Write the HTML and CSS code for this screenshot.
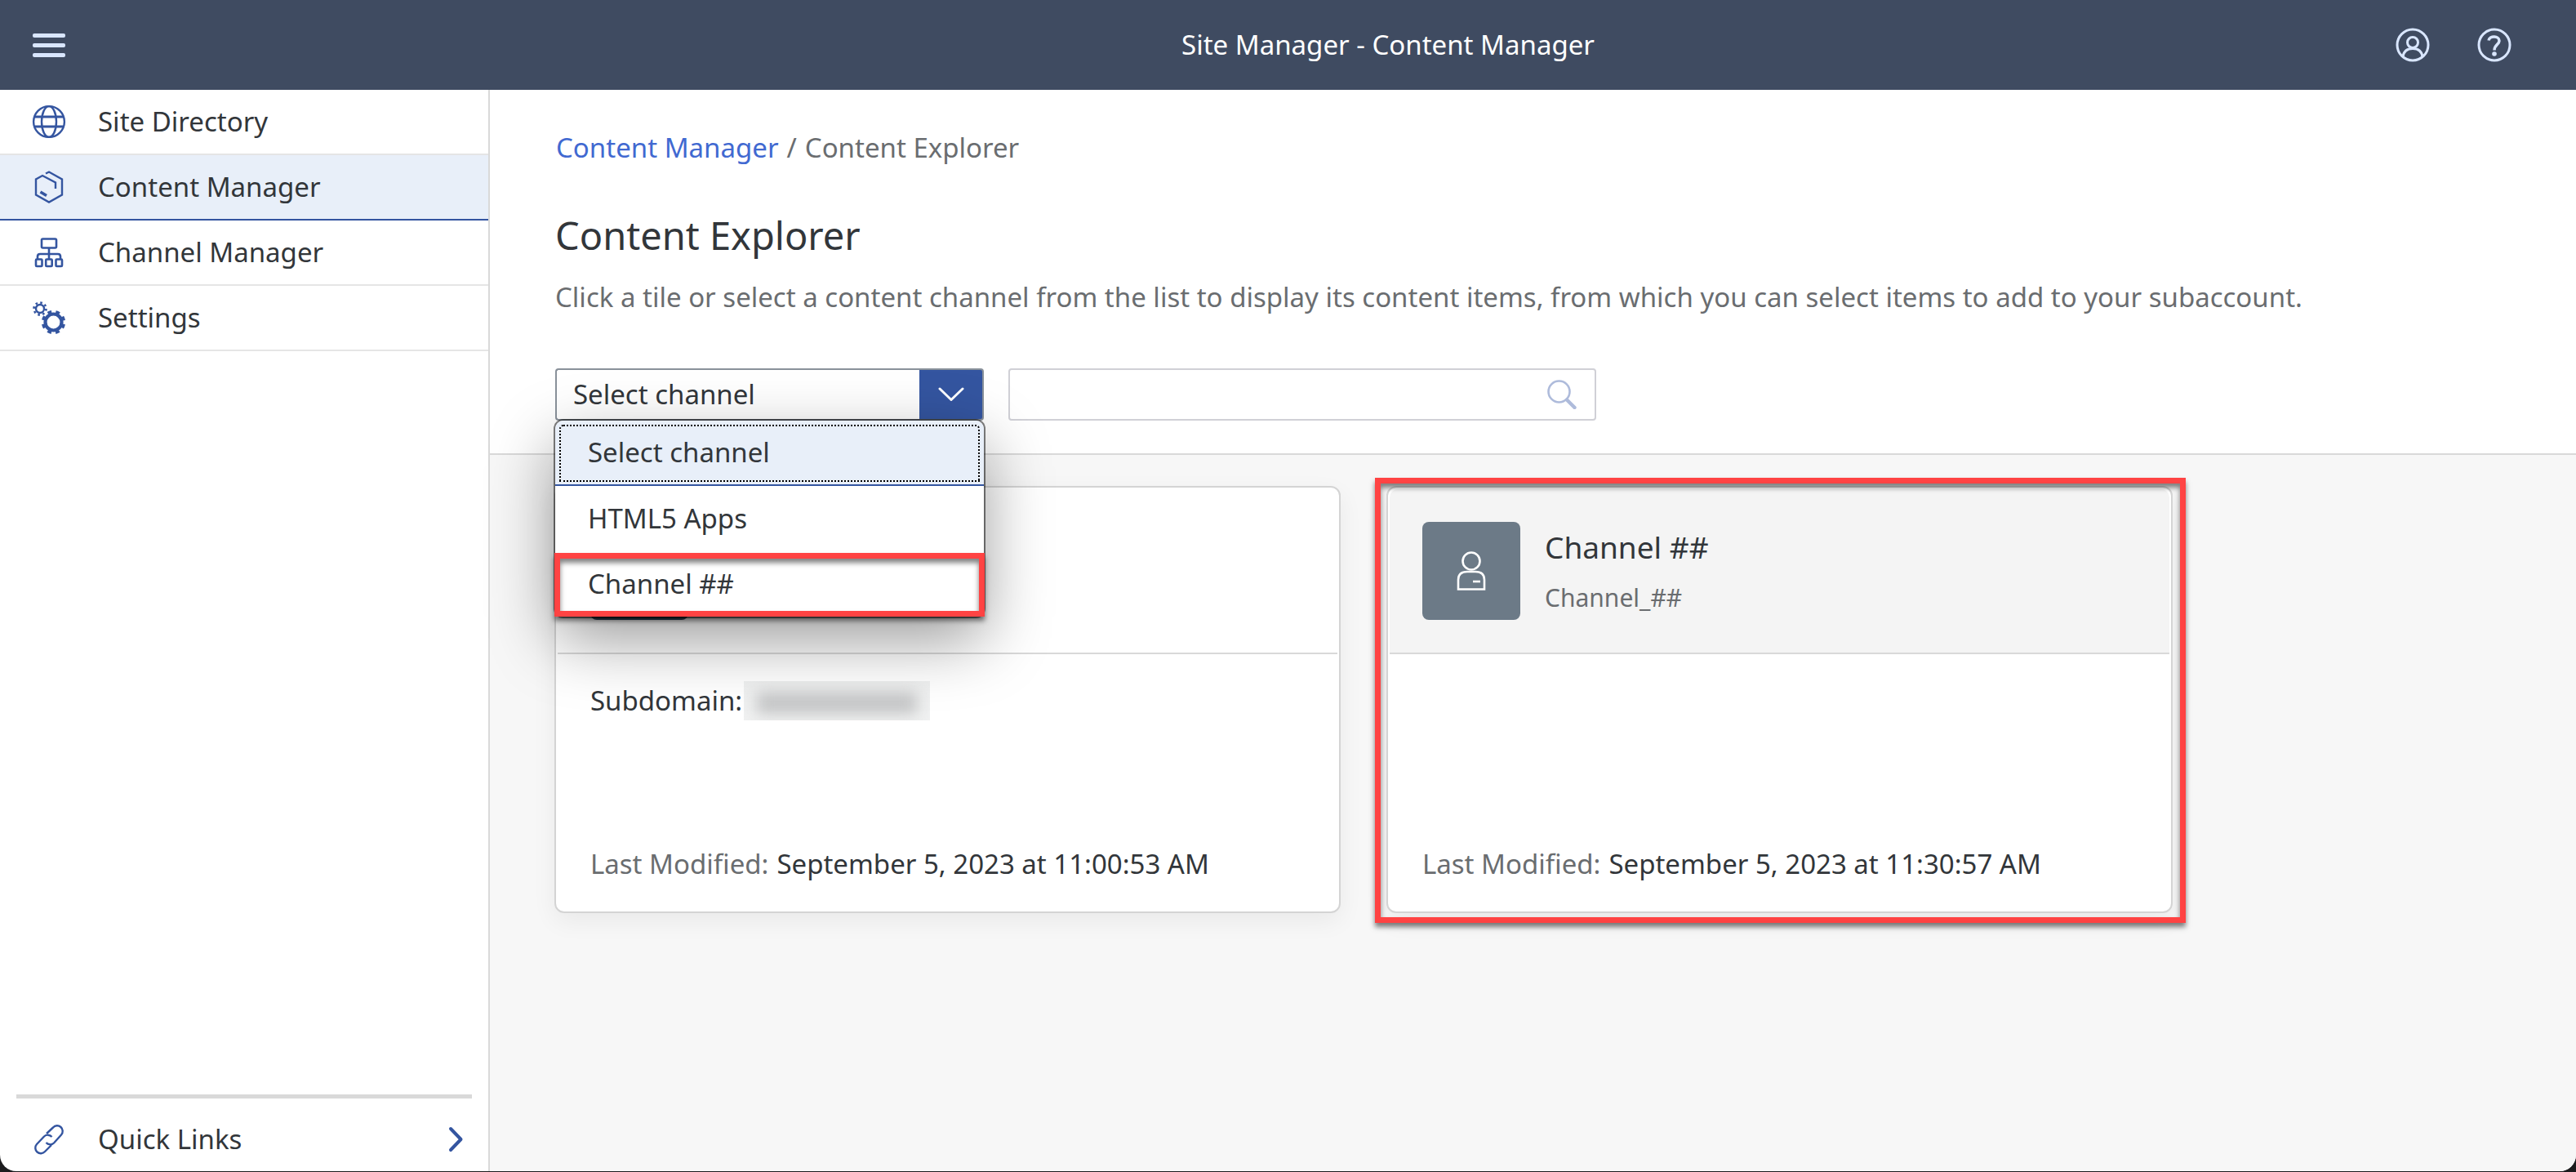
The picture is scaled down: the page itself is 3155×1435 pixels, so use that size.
FILE: index.html
```html
<!DOCTYPE html>
<html lang="en">
<head>
<meta charset="utf-8">
<title>Site Manager - Content Manager</title>
<meta name="viewport" content="width=device-width, initial-scale=1">
<link rel="stylesheet" href="styles.css">
</head>
<body>
<div class="window">
  <header class="shell">
    <button class="icon-button" type="button" aria-label="Toggle navigation">
      <svg class="icon" viewBox="0 0 40 40" aria-hidden="true"><g fill="currentColor"><rect y="6" width="40" height="5" rx="2"/><rect y="18" width="40" height="5" rx="2"/><rect y="30" width="40" height="5" rx="2"/></g></svg>
    </button>
    <span class="shell-title">Site Manager - Content Manager</span>
    <div class="shell-actions">
      <button class="icon-button" type="button" aria-label="User profile">
        <svg class="icon icon-shell" viewBox="0 0 42 42" aria-hidden="true"><g fill="none" stroke="currentColor" stroke-width="3"><circle cx="21" cy="21" r="19"/><circle cx="21" cy="18" r="6.500"/><path d="M9 35.500C10 28.500 14 25.500 21 25.500S32 28.500 33 35.500"/></g></svg>
      </button>
      <button class="icon-button" type="button" aria-label="Help">
        <svg class="icon icon-shell" viewBox="0 0 42 42" aria-hidden="true"><g fill="none" stroke="currentColor" stroke-width="3"><circle cx="21" cy="21" r="19"/><path stroke-width="3.500" d="M14 15.500C15 9.500 27 9.500 27 16C27 20.500 21 21 21 27.500"/></g><circle cx="21" cy="32" r="2.800" fill="currentColor"/></svg>
      </button>
    </div>
  </header>

  <div class="workspace">
    <nav class="sidebar" aria-label="Main">
      <ul class="nav-list">
        <li><a class="nav-item" href="#sites">
          <svg class="icon" viewBox="0 0 40 40" aria-hidden="true"><g fill="none" stroke="currentColor" stroke-width="2.400"><circle cx="20" cy="20" r="18.900"/><ellipse cx="20" cy="20" rx="9" ry="18.900"/><path stroke-width="3" d="M2.500 14h35M2.500 26h35"/></g></svg>
          Site Directory</a></li>
        <li><a class="nav-item nav-item-selected" href="#content" aria-current="page">
          <svg class="icon" viewBox="0 0 40 40" aria-hidden="true"><g fill="none" stroke="currentColor" stroke-width="2.400"><path d="M16 3.500L20 1.500L36 10.500V29.500L20 38.500L4 29.500V10.500L12 6L28 14.500V22"/><path stroke-width="3.400" d="M9.500 26L17 30.500"/></g></svg>
          Content Manager</a></li>
        <li><a class="nav-item" href="#channels">
          <svg class="icon" viewBox="0 0 40 40" aria-hidden="true"><g fill="none" stroke="currentColor" stroke-width="2.600"><rect x="11" y="3.500" width="18" height="11" rx="1.500"/><path d="M20 14V28M6 28V25Q6 22 9 22H31Q34 22 34 25V28"/><rect x="4" y="28.500" width="7.500" height="8.500" rx="1"/><rect x="16.200" y="28.500" width="7.500" height="8.500" rx="1"/><rect x="28.500" y="28.500" width="7.500" height="8.500" rx="1"/></g></svg>
          Channel Manager</a></li>
        <li><a class="nav-item" href="#settings">
          <svg class="icon" viewBox="0 0 40 40" aria-hidden="true"><g fill="none" stroke="currentColor"><circle cx="9" cy="9" r="5" stroke-width="2.400"/><circle cx="9" cy="9" r="7.500" stroke-width="2.600" stroke-dasharray="2.600 3.290"/><circle cx="25.500" cy="25.500" r="10" stroke-width="4.200"/><circle cx="25.500" cy="25.500" r="12.800" stroke-width="3.800" stroke-dasharray="4.800 5.253" stroke-dashoffset="-2.500"/></g></svg>
          Settings</a></li>
      </ul>
      <a class="nav-item quick-links" href="#links">
        <svg class="icon" viewBox="0 0 40 40" aria-hidden="true"><g fill="none" stroke="currentColor" stroke-width="2.400" stroke-linejoin="round"><path d="M17 13L25 5.500A6.500 6.500 0 0 1 35 14.500L26 24.500A6.500 6.500 0 0 1 16.500 24"/><path d="M23 27L15 35A6.500 6.500 0 0 1 5 26L14 16.500A6.500 6.500 0 0 1 23.500 17"/></g></svg>
        Quick Links
        <svg class="icon-chevron" viewBox="0 0 20 32" aria-hidden="true"><path d="M3 3L15.500 16L3 29" fill="none" stroke="currentColor" stroke-width="4" stroke-linecap="round" stroke-linejoin="round"/></svg>
      </a>
    </nav>

    <main class="content">
      <section class="page-head">
        <nav class="breadcrumb" aria-label="Breadcrumb">
          <a href="#content">Content Manager</a><span>/</span><span>Content Explorer</span>
        </nav>
        <h1 class="page-title">Content Explorer</h1>
        <p class="page-text">Click a tile or select a content channel from the list to display its content items, from which you can select items to add to your subaccount.</p>
        <div class="filters">
          <div class="channel-picker">
            <select class="channel-select" aria-label="Channel">
              <option>Select channel</option>
              <option>HTML5 Apps</option>
              <option>Channel ##</option>
            </select>
            <button class="channel-arrow" type="button" aria-label="Show channels">
              <svg class="icon-arrow" viewBox="0 0 32 18" aria-hidden="true"><path d="M2 2L16 15.500L30 2" fill="none" stroke="currentColor" stroke-width="3" stroke-linecap="round" stroke-linejoin="round"/></svg>
            </button>
            <ul class="channel-menu" role="listbox" aria-label="Channels">
              <li class="channel-option channel-option-active" role="option" aria-selected="true">Select channel</li>
              <li class="channel-option" role="option">HTML5 Apps</li>
              <li class="channel-option channel-option-marked" role="option">Channel ##</li>
            </ul>
          </div>
          <label class="search">
            <input class="search-input" type="search" aria-label="Search">
            <svg class="icon-search" viewBox="0 0 36 36" aria-hidden="true"><g fill="none" stroke="currentColor"><circle cx="14.500" cy="14.500" r="13" stroke-width="2.600"/><path d="M24 24.500L33.500 34" stroke-width="4.400" stroke-linecap="round"/></g></svg>
          </label>
        </div>
      </section>

      <section class="tiles" aria-label="Channels">
        <article class="tile">
          <div class="tile-head">
            <div class="avatar avatar-dark"></div>
          </div>
          <div class="tile-body">
            <p class="tile-line tile-line-tight">Subdomain: <span class="redacted"></span></p>
            <p class="tile-line tile-foot"><span class="muted">Last Modified:</span> September 5, 2023 at 11:00:53 AM</p>
          </div>
        </article>
        <article class="tile tile-marked">
          <div class="tile-head tile-head-hover">
            <div class="avatar">
              <svg class="icon-person" viewBox="0 0 36 50" aria-hidden="true"><g fill="none" stroke="currentColor" stroke-width="2.600"><circle cx="18" cy="13" r="10.500"/><path d="M2 47.500V36Q2 26 13 26H23Q34 26 34 36V47.500Z"/><path d="M20 38H29"/></g></svg>
            </div>
            <div class="tile-names">
              <h2 class="tile-title">Channel ##</h2>
              <p class="tile-subtitle">Channel_##</p>
            </div>
          </div>
          <div class="tile-body">
            <p class="tile-line tile-foot"><span class="muted">Last Modified:</span> September 5, 2023 at 11:30:57 AM</p>
          </div>
        </article>
      </section>
    </main>
  </div>
</div>
</body>
</html>
```
FILE: styles.css
```css
* { box-sizing: border-box; }

body {
  margin: 0;
  background: #1c1c1e;
  color: #32363a;
  font: 33px/40px "Noto Sans", "Open Sans", sans-serif;
}

h1, h2, p, ul { margin: 0; padding: 0; font-weight: 400; }
ul { list-style: none; }
a { text-decoration: none; }
button, select, input { font: inherit; color: inherit; }

.window {
  display: flex;
  flex-direction: column;
  min-height: calc(100vh - 1px);
  margin-bottom: 1px;
  overflow: hidden;
  border-radius: 0 0 20px 20px;
  background: #fff;
}

/* Shell bar */
.shell {
  display: flex;
  align-items: center;
  height: 110px;
  padding: 0 79px 0 40px;
  background: #3f4b61;
  color: #d9e6ff;
}
.shell-title {
  flex: 1;
  padding-left: 386px;
  text-align: center;
  color: #fff;
}
.shell-actions { display: flex; gap: 58px; }
.icon-button {
  display: flex;
  padding: 0;
  border: 0;
  background: none;
}
.icon { flex: none; width: 40px; height: 40px; overflow: visible; }
.icon-shell { width: 42px; height: 42px; }

.workspace { display: flex; flex: 1; }

/* Side navigation */
.sidebar {
  display: flex;
  flex: none;
  flex-direction: column;
  justify-content: space-between;
  width: 600px;
  border-right: 2px solid #d9d9d9;
}
.nav-item {
  display: flex;
  align-items: center;
  gap: 40px;
  height: 80px;
  padding: 0 40px;
  border-bottom: 2px solid #e5e5e5;
  color: #32363a;
}
.nav-item .icon, .icon-chevron { color: #3455a0; }
.nav-item-selected { border-color: #3455a0; background: #e8eff9; }
.quick-links {
  height: 94px;
  margin: 0 20px;
  padding: 10px 9px 0 20px;
  border-top: 5px solid #d9d9d9;
  border-bottom: 0;
}
.icon-chevron { width: 20px; height: 32px; margin-left: auto; }

/* Page header */
.content { display: flex; flex: 1; flex-direction: column; min-width: 0; }
.page-head {
  padding: 51px 80px 40px;
  border-bottom: 2px solid #d9d9d9;
}
.breadcrumb { display: flex; gap: 10px; padding-left: 1px; color: #6a6d70; }
.breadcrumb a { color: #4169d1; }
.page-title { margin-top: 53px; font-size: 47px; line-height: 68px; }
.page-text { margin-top: 22px; color: #6a6d70; }
.filters { display: flex; gap: 30px; margin-top: 67px; }

.channel-picker { position: relative; display: flex; width: 525px; height: 64px; }
.channel-select {
  flex: 1;
  min-width: 0;
  padding: 0 20px;
  border: 2px solid #89919a;
  border-right: 0;
  border-radius: 4px 0 0 4px;
  appearance: none;
  background: #fff;
}
.channel-arrow {
  display: flex;
  align-items: center;
  justify-content: center;
  width: 79px;
  padding: 0;
  border: 2px solid #89919a;
  border-left: 0;
  border-radius: 0 4px 4px 0;
  background: #3455a0;
  color: #fff;
}
.icon-arrow { width: 32px; height: 18px; }
.channel-menu {
  position: absolute;
  z-index: 2;
  top: 64px;
  left: 0;
  width: 100%;
  border-radius: 10px;
  background: #fff;
  box-shadow: 0 0 0 2px rgba(0, 0, 0, .5), 0 28px 80px rgba(0, 0, 0, .4);
}
.channel-option {
  position: relative;
  display: flex;
  align-items: center;
  height: 80px;
  padding: 0 40px;
}
.channel-option-active {
  border-bottom: 2px solid #3455a0;
  border-radius: 10px 10px 0 0;
  background: #e8eff9;
  outline: 2px dotted #000;
  outline-offset: -7px;
}
.channel-option-marked::after,
.tile-marked::after {
  content: "";
  position: absolute;
  border: 7px solid #ff4343;
  box-shadow: 0 5px 6px rgba(0, 0, 0, .5), inset 0 5px 6px rgba(0, 0, 0, .5);
}
.channel-option-marked::after { inset: 2px -1px 0; }

.search {
  display: flex;
  align-items: center;
  width: 720px;
  height: 64px;
  padding-right: 22px;
  border: 2px solid #d0d0d6;
  border-radius: 4px;
}
.search-input {
  flex: 1;
  min-width: 0;
  padding: 0 20px;
  border: 0;
  outline: 0;
  background: none;
}
.icon-search { width: 36px; height: 36px; color: #aebbdb; }

/* Channel tiles */
.tiles {
  display: grid;
  flex: 1;
  grid-template-columns: repeat(auto-fill, 963px);
  align-content: start;
  gap: 56px;
  padding: 38px 79px;
  background: #f7f7f7;
}
.tile {
  position: relative;
  display: flex;
  flex-direction: column;
  min-height: 523px;
  padding: 2px;
  border: 2px solid #d4d4d4;
  border-radius: 12px;
  background: #fff;
  box-shadow: 0 10px 30px rgba(0, 0, 0, .06);
}
.tile-marked::after { inset: -12px -18px -14px -16px; }
.tile-head {
  display: flex;
  gap: 30px;
  padding: 40px;
  border-bottom: 2px solid #d9d9d9;
  border-radius: 10px 10px 0 0;
}
.tile-head-hover { background: #f4f4f4; }
.avatar {
  display: flex;
  align-items: center;
  justify-content: center;
  width: 120px;
  height: 120px;
  border-radius: 8px;
  background: #6c7a87;
  color: #fff;
}
.avatar-dark { background: #354a5f; }
.icon-person { width: 36px; height: 50px; }
.tile-names { display: flex; flex-direction: column; gap: 16px; padding-top: 5px; }
.tile-title { font-size: 37px; line-height: 52px; }
.tile-subtitle { color: #6a6d70; font-size: 30px; line-height: 40px; }
.tile-body {
  display: flex;
  flex: 1;
  flex-direction: column;
  padding: 33px 40px 36px;
}
.tile-line { display: flex; align-items: center; gap: 10px; }
.tile-line-tight { gap: 2px; }
.tile-foot { margin-top: auto; }
.muted { color: #6a6d70; }
.redacted {
  width: 228px;
  height: 48px;
  overflow: hidden;
  background: #f0f1f1;
}
.redacted::before {
  content: "";
  display: block;
  height: 26px;
  margin: 14px 16px;
  background: #c4c5c6;
  filter: blur(9px);
}
```
